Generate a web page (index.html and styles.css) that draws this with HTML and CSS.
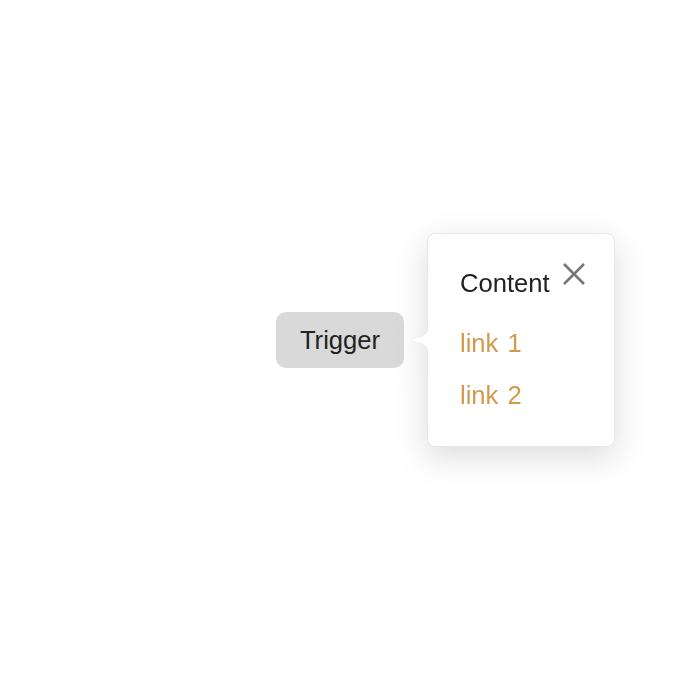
FILE: index.html
```html
<!DOCTYPE html>
<html>
<head>
<meta charset="utf-8">
<link rel="stylesheet" href="styles.css">
</head>
<body>
<div class="stage">
  <div class="anchor">
    <button class="trigger">Trigger</button>
    <div class="popover">
      <svg class="arrow" width="18" height="30" viewBox="0 0 18 30"><path d="M18 0 C18 8 14 11 8 13 C5 14 2 14 2 15 C2 16 5 16 8 17 C14 19 18 22 18 30 Z" fill="#fff"/></svg>
      <div class="card">
        <div class="head">
          <span class="title">Content</span>
          <svg class="close" width="24" height="24" viewBox="0 0 24 24"><path d="M2 2 L22 22 M22 2 L2 22" stroke="#777" stroke-width="2.6" fill="none"/></svg>
        </div>
        <div class="links">
          <a class="link">link 1</a>
          <a class="link">link 2</a>
        </div>
      </div>
    </div>
  </div>
</div>
</body>
</html>
```
FILE: styles.css
```css
html, body {
  margin: 0;
  padding: 0;
  background: #fff;
  font-family: "Liberation Sans", Arial, sans-serif;
}
.stage {
  width: 680px;
  height: 680px;
  display: flex;
  align-items: center;
  justify-content: center;
}
.anchor {
  position: relative;
  display: flex;
}
.trigger {
  width: 128px;
  height: 56px;
  border: none;
  border-radius: 10px;
  background: #d9d9d9;
  color: #222;
  font-family: "Liberation Sans", Arial, sans-serif;
  font-size: 25.6px;
  padding: 0;
}
.popover {
  position: absolute;
  left: calc(100% + 23px);
  top: 50%;
  transform: translateY(-50%);
  filter: drop-shadow(0 10px 16px rgba(0,0,0,0.14));
}
.arrow {
  position: absolute;
  left: -16px;
  top: 50%;
  margin-top: -15px;
  z-index: 2;
}
.card {
  width: 188px;
  box-sizing: border-box;
  background: #fff;
  border: 1px solid #e6e6e6;
  border-radius: 8px;
  padding: 33.5px 29px 36.5px 32px;
}
.head {
  display: flex;
  justify-content: space-between;
  align-items: flex-start;
  height: 30px;
}
.title {
  font-size: 25.6px;
  line-height: 30px;
  color: #222;
}
.close {
  margin-top: -5.5px;
  margin-right: -1px;
}
.links {
  margin-top: 30px;
  display: flex;
  flex-direction: column;
  gap: 22px;
}
.link {
  font-size: 25.6px;
  line-height: 30px;
  color: #d39a4c;
  word-spacing: 2px;
}
```
